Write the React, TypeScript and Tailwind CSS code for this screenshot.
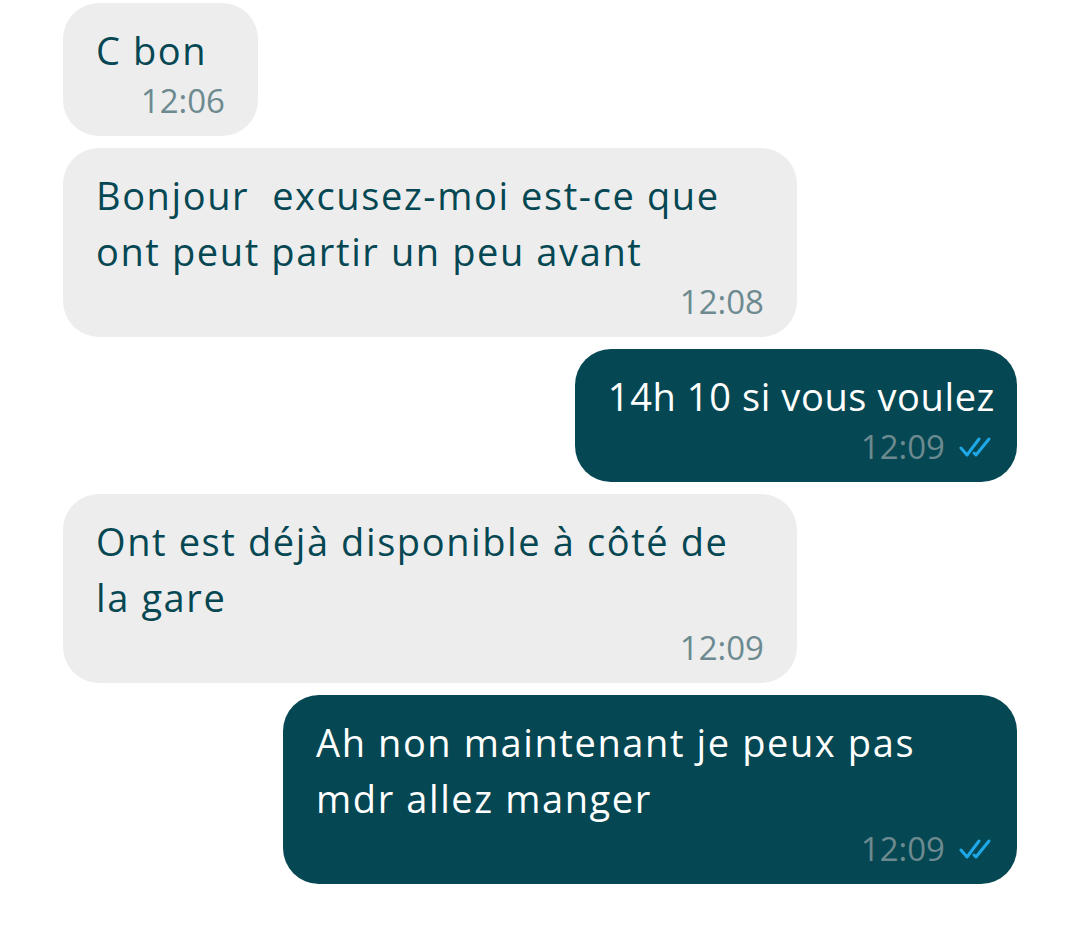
import React from 'react';

interface Message {
  lines: string[];
  time: string;
  sent?: boolean;
  wide?: boolean;
  tracking?: string;
}

const messages: Message[] = [
  { lines: ['C bon'], time: '12:06' },
  { lines: ['Bonjour  excusez-moi est-ce que', 'ont peut partir un peu avant'], time: '12:08', wide: true },
  { lines: ['14h 10 si vous voulez'], time: '12:09', sent: true, tracking: 'tracking-[0.6px]' },
  { lines: ['Ont est déjà disponible à côté de', 'la gare'], time: '12:09', wide: true },
  { lines: ['Ah non maintenant je peux pas', 'mdr allez manger'], time: '12:09', sent: true, wide: true },
];

const DoubleCheck = () => (
  <svg width="34" height="22" viewBox="0 0 34 22" fill="none" stroke="#1fa8e8" strokeWidth="3" strokeLinecap="round" strokeLinejoin="round">
    <path d="M2 12 L8 19 L20 3" />
    <path d="M15 17 L17 19 L30 3" />
  </svg>
);

const Bubble: React.FC<{ msg: Message }> = ({ msg }) => {
  const { lines, time, sent, wide, tracking } = msg;
  return (
    <div
      className={`${sent ? 'self-end bg-[#054752] text-white pl-[33px] pr-[22px]' : 'self-start bg-[#ededed] text-[#054752] px-[33px] min-w-[195px]'} ${wide ? 'w-[734px]' : ''} rounded-[36px] pt-[19px] pb-[12px]`}
    >
      <div className={`text-[38px] leading-[56px] whitespace-pre ${tracking ?? 'tracking-[1.6px]'}`}>
        {lines.map((l, i) => (
          <div key={i}>{l}</div>
        ))}
      </div>
      <div className={`flex items-center justify-end gap-[14px] text-[33px] leading-[46px] text-[#6c8a8f] ${sent ? 'pr-[2px]' : ''}`}>
        <span>{time}</span>
        {sent && <DoubleCheck />}
      </div>
    </div>
  );
};

export default function App() {
  return (
    <div className="w-[1080px] h-[928px] bg-white pt-[3px] px-[63px] flex flex-col gap-[12px]" style={{ fontFamily: '"Open Sans", "Noto Sans", sans-serif' }}>
      {messages.map((m, i) => (
        <Bubble key={i} msg={m} />
      ))}
    </div>
  );
}
